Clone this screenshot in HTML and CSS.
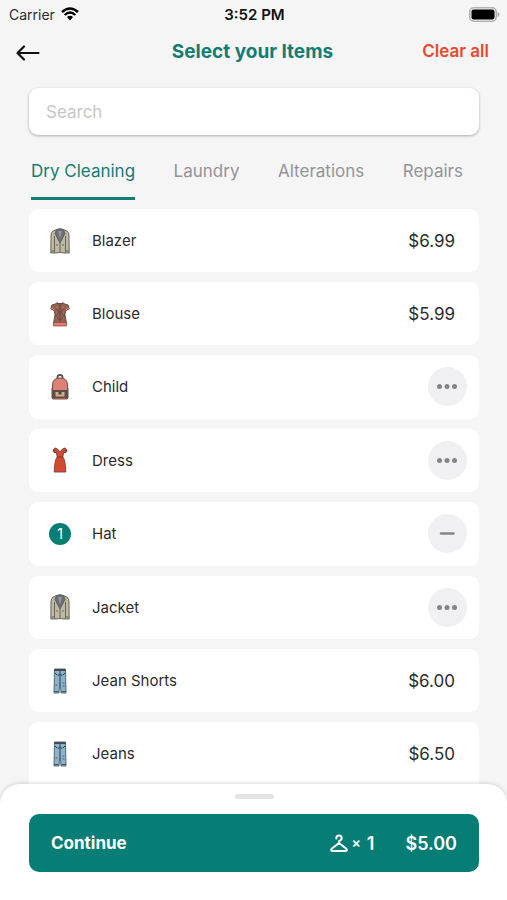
FILE: index.html
```html
<!DOCTYPE html>
<html lang="en">
<head>
<meta charset="utf-8">
<meta name="viewport" content="width=device-width, initial-scale=1">
<title>Select your Items</title>
<link rel="stylesheet" href="styles.css">
</head>
<body>
<svg width="0" height="0" class="sprite" aria-hidden="true">
  <symbol id="jacket" viewBox="0 0 20 26">
    <path d="M6.500 1.500 2.500 3.500Q1.200 4.500 1 8L.8 25H5l5-.4 5 .4h4.200L19 8q-.2-3.500-1.500-4.500l-4-2z" fill="#bdb9a2" stroke="#5a5954" stroke-width=".9"/>
    <path d="M6.500 1.500 10 .6l3.500.9L15 5.500 10 15 5 5.500z" fill="#6e6f76" stroke="#55555a" stroke-width=".8"/>
    <path d="m8.200 3 1.800 8 1.800-8z" fill="#96979d"/>
    <path d="M4.500 8v16.500M15.500 8v16.500M10 15v9" fill="none" stroke="#5d5a50" stroke-width=".9"/>
    <path d="M6 17h2M12 17h2M1 23h3M16 23h3" stroke="#66635a" stroke-width=".9"/>
  </symbol>
  <symbol id="blouse" viewBox="0 0 20 26">
    <path d="M6.500 2.500 2 4 .8 8l3.400 1.500L5 14l-1.500 8h13L15 14l.8-4.500L19.200 8 18 4l-4.500-1.500z" fill="#94604f" stroke="#5d4842" stroke-width=".9"/>
    <path d="M3.500 21.500h13V25h-13z" fill="#e27c6d" stroke="#94504a" stroke-width=".8"/>
    <path d="M1.300 7 4.300 8.300M18.700 7l-3 1.300" stroke="#d27365" stroke-width="1.600"/>
    <path d="m6.500 .8 3.500 4 3.500-4M10 5v16M6.500 8l3 3-4 4 4 4M13.500 8l-3 3 4 4-4 4" fill="none" stroke="#5b4640" stroke-width=".9"/>
    <path d="M6 6h2M12 6h2M6 12h1M13 12h1M6 17h1M13 17h1" stroke="#b6806d"/>
  </symbol>
  <symbol id="backpack" viewBox="0 0 20 26">
    <path d="M7.500 5V3Q7.500 1 10 1t2.500 2v2" fill="none" stroke="#555154" stroke-width="1.800"/>
    <path d="M2.500 11Q2.500 4 10 4t7.500 7v14h-15z" fill="#dd8175" stroke="#70504c"/>
    <path d="M3 16h14v8H3z" fill="#5e4c43"/>
    <path d="M5.500 18h9v4.500h-9z" fill="#c9b08f"/>
    <path d="M8.500 18h3v2.500h-3z" fill="#4e4541"/>
    <path d="M3 24.500h14" stroke="#b65a50"/>
    <path d="M2 14v10M18 14v10" stroke="#67514d"/>
  </symbol>
  <symbol id="dress" viewBox="0 0 20 26">
    <path d="M5.500 1 3 3l1.500 3 1.800-1 .9 5Q4.500 13 4.200 25h11.600Q15.500 13 12.800 10l.9-5 1.800 1L17 3l-2.500-2-2 1L10 5 7.500 2z" fill="#d24a30" stroke="#7d3d33" stroke-width=".9"/>
    <path d="M7 10h6" stroke="#842f23"/>
    <path d="m5.500 1-2 2.500L5 6M14.500 1l2 2.500L15 6" fill="none" stroke="#594441"/>
  </symbol>
  <symbol id="jeans" viewBox="0 0 20 26">
    <path d="M4.500 1h11l.5 24h-5l-1-14-1 14H4z" fill="#8ab4cc" stroke="#4a5a67" stroke-width=".9"/>
    <path d="M4.200 2h11.600" stroke="#414c56" stroke-width="2"/>
    <path d="M10 3v8M7.500 7h5M5 5l2 2M15 5l-2 2" fill="none" stroke="#2e4357"/>
    <path d="M5.500 17h2M12.500 15h2M12.500 18h2" stroke="#436880"/>
    <path d="M4 23.500h4.500M11.500 23.500H16" stroke="#445664"/>
  </symbol>
</svg>
<div class="app">
  <div class="status">
    <span class="carrier">Carrier
      <svg width="18" height="14" viewBox="0 0 18 14" aria-hidden="true"><path d="M1 5Q9-2 17 5M3.700 8Q9 3 14.300 8" fill="none" stroke="#000" stroke-width="2.400"/><path d="M6 10q3-2.600 6 0l-3 3.500z"/></svg>
    </span>
    <span class="time">3:52 PM</span>
    <svg class="battery" width="31" height="15" viewBox="0 0 31 15" aria-hidden="true"><rect x=".8" y=".8" width="26.400" height="13.400" rx="4" fill="#f5f5f5" stroke="#b2b2b2" stroke-width="1.600"/><rect x="2.500" y="2.500" width="23" height="10" rx="2"/><path d="M28.500 5q2 1 2 2.500t-2 2.500z" fill="#aaa"/></svg>
  </div>
  <header class="header">
    <button class="back" type="button" aria-label="Back"><svg width="24" height="16" viewBox="0 0 24 16"><path d="M8 1.500 1.500 8 8 14.500M1.500 8h21" fill="none" stroke="#111" stroke-width="2.200" stroke-linecap="round" stroke-linejoin="round"/></svg></button>
    <h1 class="title">Select your Items</h1>
    <button class="clear" type="button">Clear all</button>
  </header>
  <input class="search" type="search" placeholder="Search" aria-label="Search">
  <nav class="tabs">
    <a class="tab active" href="#dry">Dry Cleaning</a>
    <a class="tab" href="#laundry">Laundry</a>
    <a class="tab" href="#alterations">Alterations</a>
    <a class="tab" href="#repairs">Repairs</a>
  </nav>
  <ul class="list">
    <li class="item"><svg class="icon" aria-hidden="true"><use href="#jacket"/></svg><span class="name">Blazer</span><span class="price">$6.99</span></li>
    <li class="item"><svg class="icon" aria-hidden="true"><use href="#blouse"/></svg><span class="name">Blouse</span><span class="price">$5.99</span></li>
    <li class="item"><svg class="icon" aria-hidden="true"><use href="#backpack"/></svg><span class="name">Child</span><button class="round" type="button" aria-label="Child options"><svg width="21" height="5" viewBox="0 0 21 5"><circle cx="2.500" cy="2.500" r="2.500"/><circle cx="10" cy="2.500" r="2.500"/><circle cx="17.500" cy="2.500" r="2.500"/></svg></button></li>
    <li class="item"><svg class="icon" aria-hidden="true"><use href="#dress"/></svg><span class="name">Dress</span><button class="round" type="button" aria-label="Dress options"><svg width="21" height="5" viewBox="0 0 21 5"><circle cx="2.500" cy="2.500" r="2.500"/><circle cx="10" cy="2.500" r="2.500"/><circle cx="17.500" cy="2.500" r="2.500"/></svg></button></li>
    <li class="item"><span class="count">1</span><span class="name">Hat</span><button class="round" type="button" aria-label="Remove one hat"><svg width="17" height="3" viewBox="0 0 17 3"><path d="M2 1.500h12.500" stroke="#858588" stroke-width="2.400" stroke-linecap="round"/></svg></button></li>
    <li class="item"><svg class="icon" aria-hidden="true"><use href="#jacket"/></svg><span class="name">Jacket</span><button class="round" type="button" aria-label="Jacket options"><svg width="21" height="5" viewBox="0 0 21 5"><circle cx="2.500" cy="2.500" r="2.500"/><circle cx="10" cy="2.500" r="2.500"/><circle cx="17.500" cy="2.500" r="2.500"/></svg></button></li>
    <li class="item"><svg class="icon" aria-hidden="true"><use href="#jeans"/></svg><span class="name">Jean Shorts</span><span class="price">$6.00</span></li>
    <li class="item"><svg class="icon" aria-hidden="true"><use href="#jeans"/></svg><span class="name">Jeans</span><span class="price">$6.50</span></li>
  </ul>
  <footer class="sheet">
    <div class="handle"></div>
    <button class="continue" type="button">
      <span class="label">Continue</span>
      <svg width="18" height="19" viewBox="0 0 18 19" aria-hidden="true"><path d="M6.300 4.500Q6.300 1.500 9 1.500t2.700 2.600Q11.700 6 9 7.200V9l7.300 5.700q1.500 2.300-1.300 2.300H3Q.2 17 1.700 14.700L9 9" fill="none" stroke="#fff" stroke-width="2" stroke-linecap="round" stroke-linejoin="round"/></svg>
      <span class="times">×</span>
      <span class="quantity">1</span>
      <span class="total">$5.00</span>
    </button>
  </footer>
</div>
</body>
</html>
```
FILE: styles.css
```css
* { box-sizing: border-box; }

body {
  margin: 0;
  background: #f5f5f5;
  color: #2b2b2e;
  font-family: Inter, "Liberation Sans", sans-serif;
  font-size: 15px;
}

button {
  border: 0;
  padding: 0;
  background: none;
  font: inherit;
  cursor: pointer;
}

svg { display: block; }
.sprite { position: absolute; }

.app {
  display: flex;
  flex-direction: column;
  height: 100vh;
}

.status,
.header {
  display: grid;
  grid-template-columns: 1fr auto 1fr;
  align-items: center;
}

.status {
  height: 28px;
  padding: 0 7px 0 9px;
}

.carrier {
  display: flex;
  align-items: center;
  gap: 6px;
  font-size: 14px;
}

.time { color: #111; font-weight: 600; }
.battery { justify-self: end; }

.header {
  height: 48px;
  padding: 0 18px 2px 16px;
}

.back { justify-self: start; padding-top: 3px; }

.title {
  margin: 0;
  color: #147d73;
  font-size: 19px;
  font-weight: 700;
}

.clear {
  justify-self: end;
  color: #e8492d;
  font-size: 17px;
  font-weight: 600;
}

.search {
  flex: none;
  height: 47px;
  margin: 12px 28px 0 29px;
  padding: 0 17px;
  border: 0;
  border-radius: 9px;
  background: #fff;
  box-shadow: 0 1px 3px rgba(0, 0, 0, .3);
  color: inherit;
  font: inherit;
  font-size: 17px;
  appearance: none;
}

.search::placeholder { color: #c6c6c8; }

.tabs {
  display: flex;
  justify-content: space-between;
  margin: 13px 44px 9px 31px;
}

.tab {
  height: 52px;
  border-bottom: 3px solid transparent;
  color: #939398;
  font-size: 17px;
  line-height: 46px;
  text-decoration: none;
}

.tab.active {
  border-color: #147d73;
  color: #147d73;
}

.list {
  display: flex;
  flex: 1;
  flex-direction: column;
  gap: 10px;
  min-height: 0;
  margin: 0;
  padding: 0 28px 0 29px;
  overflow: auto;
  list-style: none;
  scrollbar-width: none;
}

.item {
  display: flex;
  flex: 1 0 auto;
  align-items: center;
  min-height: 63px;
  padding: 0 12px 0 20px;
  border-radius: 9px;
  background: #fff;
}

.item:last-child { border-radius: 9px 9px 0 0; }

.icon { width: 22px; height: 26px; }
.name { flex: 1; margin-left: 21px; }
.price { margin-right: 12px; font-size: 17px; }

.count {
  width: 22px;
  height: 22px;
  border-radius: 50%;
  background: #067d75;
  color: #fff;
  line-height: 22px;
  text-align: center;
}

.round {
  display: grid;
  place-items: center;
  width: 39px;
  height: 39px;
  border-radius: 50%;
  background: #f0f0f2;
  fill: #858588;
}

.sheet {
  z-index: 1;
  margin-top: -1px;
  padding: 10px 28px 28px 29px;
  border-radius: 20px 20px 0 0;
  background: #fff;
  box-shadow: 0 -1px 4px rgba(0, 0, 0, .14);
}

.handle {
  width: 39px;
  height: 5px;
  margin: 0 auto 15px;
  border-radius: 3px;
  background: #e4e4e6;
}

.continue {
  display: flex;
  align-items: center;
  width: 100%;
  height: 58px;
  padding: 0 22px;
  border-radius: 10px;
  background: #067d75;
  color: #fff;
  font-size: 18px;
  font-weight: 600;
}

.label { flex: 1; font-size: 17px; font-weight: 700; text-align: left; }
.times { margin: 0 6px 2px 3px; font-size: 14px; }
.total { margin-left: 31px; }
```
